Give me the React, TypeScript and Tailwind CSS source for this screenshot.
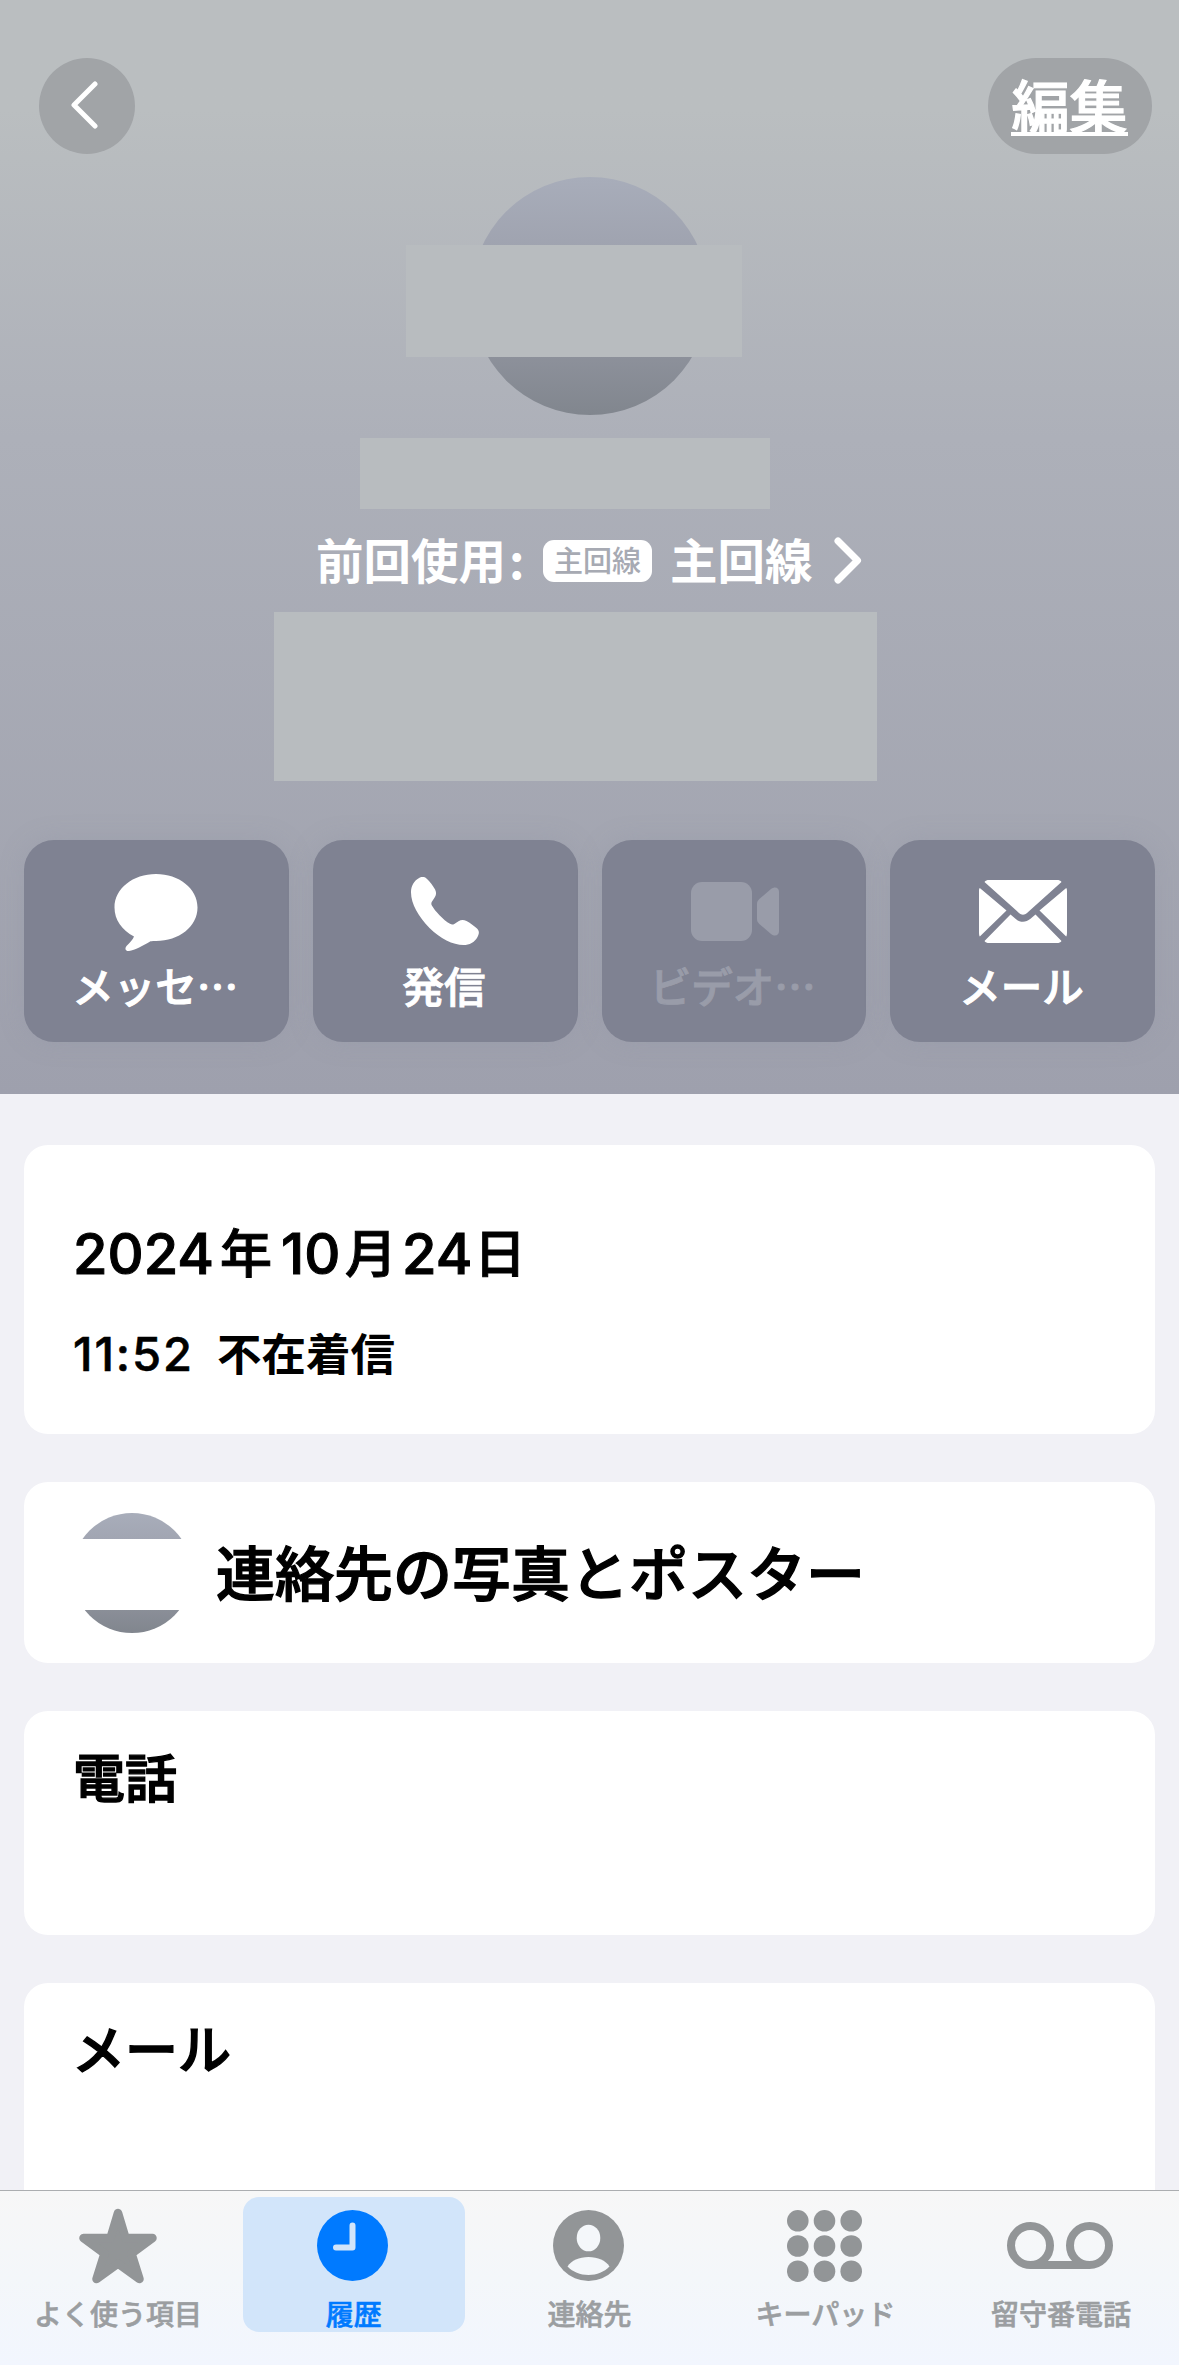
import type { ReactNode } from "react";

const Avatar = ({ className }: { className: string }) => (
  <div
    className={`rounded-full bg-linear-to-b from-[#a8adba] via-[#999ca8] to-[#81868e] ${className}`}
  />
);

const MessageIcon = () => (
  <svg className="mt-[3px] w-[84px] h-[78px]" viewBox="0 0 84 78" fill="currentColor">
    <path d="M42 0C65 0 83.500 14.500 83.500 33.500S65 67 42 67c-2 0-4 0-5.500.3C29 72 21 76 15 77c-3.500.4-4.500-2.500-2.500-5C16 68.500 19 65.500 20 62.500 8 56 .5 46 .5 33.500.5 14.500 19 0 42 0z" />
  </svg>
);

const PhoneIcon = () => (
  <svg className="w-[68px] h-[68px]" viewBox="0 0 68 68" fill="currentColor">
    <path d="M15.500 1.500C13.500-.5 11-.6 8.500.8 3 3.500 0 9 0 15.500c0 11 7.500 24.500 18.500 35.500C29 61.500 42 68 52.500 68c6 0 11-2.500 14-8 1.800-3.500 2-6-.5-8.500-3-2.800-7-5.500-10.500-7.500-3-1.500-5.500-1.300-8 .3l-4.200 2.700c-1.500.9-2.800.8-4.300-.2-3.500-2-7-5-10.500-8.600-3.500-3.500-6-6.700-7.500-9.400-.9-1.500-.9-2.800 0-4.200l2.500-3.800c1.900-2.900 2-5.300.6-8.300C22 9 19 4.500 15.500 1.500z" />
  </svg>
);

const VideoIcon = () => (
  <svg className="ml-[2px] w-[88px] h-[59px]" viewBox="0 0 88 59" fill="currentColor">
    <rect width="61" height="59" rx="11" />
    <path d="M66 22c0-2 .8-3.500 2.300-5L80 7c4-3 8-1.500 8 3v39c0 4.500-4 6-8 3L68.300 42C66.800 40.500 66 39 66 37z" />
  </svg>
);

const MailIcon = () => (
  <svg className="w-[88px] h-[63px]" viewBox="0 0 88 63" fill="currentColor">
    <path d="M5.500 2C6.500.5 8 0 10 0h68c2 0 3.500.5 4.500 2L48 33c-2.500 2.300-5.500 2.300-8 0z" />
    <path d="M.8 8L27.500 30.500.8 56.500C.2 55.500 0 54 0 52V11c0-1.500.2-2.500.8-3zM87.200 8L60.500 30.500 87.200 56.500c.6-1 .8-2.500.8-4.500V11c0-1.500-.2-2.500-.8-3z" />
    <path d="M31.500 34.500l5 4.300c5 4 10 4 15 0l5-4.300 26 26.500c-1 1.500-2.500 2-4.500 2H10c-2 0-3.500-.5-4.500-2z" />
  </svg>
);

const StarIcon = () => (
  <svg className="ml-[2px] w-[78px] h-[76px]" viewBox="0 0 78 76" fill="currentColor">
    <path
      d="M39 5L46.500 30H73.500L52.500 45.500L60.500 71L39 55.500L17.500 71L25.500 45.500L4.500 30H31.500Z"
      stroke="currentColor"
      strokeWidth="8.5"
      strokeLinejoin="round"
    />
  </svg>
);

const ClockIcon = () => (
  <svg className="size-[71px]" viewBox="0 0 71 71">
    <circle cx="35.5" cy="35.5" r="35.5" fill="currentColor" />
    <path
      d="M35.500 15.500V37.500H19"
      fill="none"
      stroke="#d2e5fa"
      strokeWidth="6"
      strokeLinecap="round"
      strokeLinejoin="round"
    />
  </svg>
);

const ContactIcon = () => (
  <svg className="size-[71px]" viewBox="0 0 71 71">
    <circle cx="35.5" cy="35.5" r="35.5" fill="currentColor" />
    <ellipse cx="35.500" cy="28" rx="11.800" ry="13.300" fill="#f4f7fa" />
    <path
      d="M14.500 56.500C18.500 50.500 26 47 35.500 47S52.500 50.500 56.500 56.500C51 62 44 65 35.500 65S20 62 14.500 56.500z"
      fill="#f4f7fa"
    />
  </svg>
);

const KeypadIcon = () => (
  <svg className="w-[75px] h-[72px]" viewBox="0 0 75 72" fill="currentColor">
    {[10.8, 36, 61.2].map((cy) =>
      [10.8, 37.5, 64.2].map((cx) => (
        <circle key={`${cx}-${cy}`} cx={cx} cy={cy} r="10.8" />
      ))
    )}
  </svg>
);

const VoicemailIcon = () => (
  <svg
    className="w-[106px] h-[47px]"
    viewBox="0 0 106 47"
    fill="none"
    stroke="currentColor"
    strokeWidth="8"
  >
    <circle cx="23.5" cy="23.500" r="19.500" />
    <circle cx="82.500" cy="23.500" r="19.500" />
    <path d="M23.500 43H82.500" />
  </svg>
);

interface ActionProps {
  icon: ReactNode;
  label: string;
  disabled?: boolean;
}

const actions: ActionProps[] = [
  { icon: <MessageIcon />, label: "メッセ…" },
  { icon: <PhoneIcon />, label: "発信" },
  { icon: <VideoIcon />, label: "ビデオ…", disabled: true },
  { icon: <MailIcon />, label: "メール" },
];

const Action = ({ icon, label, disabled }: ActionProps) => (
  <button
    disabled={disabled}
    className="h-[202px] rounded-[30px] bg-[#7f8292] text-white disabled:text-[#999ca9] flex flex-col items-center pt-[27px] shadow-[0_0_24px_rgba(140,143,160,0.25)]"
  >
    <span className="h-[88px] flex items-center justify-center">{icon}</span>
    <span className="mt-[5px] mr-[2px] text-[41.500px] leading-[50px] font-medium whitespace-nowrap [-webkit-text-stroke:1px_currentColor]">
      {label}
    </span>
  </button>
);

const tabs = [
  { icon: <StarIcon />, label: "よく使う項目" },
  { icon: <ClockIcon />, label: "履歴", active: true },
  { icon: <ContactIcon />, label: "連絡先" },
  { icon: <KeypadIcon />, label: "キーパッド" },
  { icon: <VoicemailIcon />, label: "留守番電話" },
];

const Header = () => (
  <header className="h-[1094px] shrink-0 bg-linear-to-b from-[#babec0] from-10% via-[#adb0b9] via-40% to-[#9ea0ad] text-white flex flex-col items-center">
    <div className="w-full h-[154px] pt-[58px] pl-[39px] pr-[27px] flex justify-between">
      <button className="size-24 rounded-full bg-[#a1a4a7] flex items-center justify-center">
        <svg
          className="w-[28px] h-[48px] -ml-[7px] -mt-[2px]"
          viewBox="0 0 28 48"
          fill="none"
          stroke="currentColor"
          strokeWidth="5"
          strokeLinecap="round"
          strokeLinejoin="round"
        >
          <path d="M25 3L4 24L25 45" />
        </svg>
      </button>
      <button className="w-[164px] h-24 rounded-full bg-[#a1a4a7] flex justify-center text-[58px] leading-[92px] font-medium [-webkit-text-stroke:1.2px_currentColor]">
        <span className="mr-[1px] h-[78px] border-b-4 border-white">編集</span>
      </button>
    </div>

    <div className="mt-[23px] h-[238px] relative">
      <Avatar className="size-[238px]" />
      <div className="absolute -left-[65px] top-[68px] w-[336px] h-[112px] bg-[#b8bcbf]" />
    </div>
    <div className="mt-[23px] mr-[50px] w-[410px] h-[71px] bg-[#b8bcbf]" />

    <div className="mt-[20px] h-[60px] w-full pl-[316px] flex items-center text-[47.500px] leading-[60px] font-bold">
      <span className="w-[193px] whitespace-nowrap">前回使用</span>
      <span className="w-[34px]">:</span>
      <span className="mt-[3px] w-[109px] h-[42px] rounded-[11px] bg-white text-[#a7aab3] text-[29px] leading-[38px] font-medium text-center">
        主回線
      </span>
      <span className="ml-[18px] whitespace-nowrap">主回線</span>
      <svg
        className="ml-[21px] mt-[3px] w-[28px] h-[47px]"
        viewBox="0 0 28 47"
        fill="none"
        stroke="currentColor"
        strokeWidth="7"
        strokeLinecap="round"
        strokeLinejoin="round"
      >
        <path d="M4 4L23.500 23.500L4 43" />
      </svg>
    </div>
    <div className="mt-[23px] mr-[28px] w-[603px] h-[169px] bg-[#b8bcbf]" />

    <div className="mt-[59px] w-full px-6 grid grid-cols-4 gap-6">
      {actions.map((action) => (
        <Action key={action.label} {...action} />
      ))}
    </div>
  </header>
);

const TabBar = () => (
  <nav className="h-[175px] shrink-0 border-t border-[#abadb0] bg-linear-to-b from-[#f7f7f7] via-[#f4f7fa] to-[#f2f6fe] grid grid-cols-5 pt-[6px]">
    {tabs.map(({ icon, label, active }) => (
      <div
        key={label}
        className={`mx-auto w-[222px] h-[135px] rounded-[16px] flex flex-col items-center ${
          active ? "bg-[#d2e5fa] text-[#007aff]" : "text-[#929597]"
        }`}
      >
        <span className="h-[99px] mr-[2px] flex items-center">{icon}</span>
        <span
          className={`text-[28px] leading-[38px] font-medium whitespace-nowrap [-webkit-text-stroke:0.6px_currentColor] ${
            active ? "" : "text-[#9b9ea1]"
          }`}
        >
          {label}
        </span>
      </div>
    ))}
  </nav>
);

export default function App() {
  return (
    <div
      lang="ja"
      className="w-[1179px] h-[2365px] overflow-hidden flex flex-col bg-[#f1f1f6] text-black font-['Noto_Sans_CJK_JP',sans-serif]"
    >
      <Header />

      <main className="flex-1 min-h-0 overflow-hidden px-6 pt-[51px] flex flex-col gap-[48px]">
        <section className="h-[289px] shrink-0 rounded-[24px] bg-white pl-[49px] pt-[74px] font-['Inter','Noto_Sans_CJK_JP',sans-serif]">
          <h2 className="text-[56px] leading-[70px] font-medium whitespace-nowrap flex [-webkit-text-stroke:1px_currentColor]">
            <span className="w-[147px]">2024</span>
            <span className="w-[61px] text-[52px] leading-[72px]">年</span>
            <span className="w-[64px]">10</span>
            <span className="w-[57px] text-[52px] leading-[72px]">月</span>
            <span className="w-[72px]">24</span>
            <span className="text-[52px] leading-[72px]">日</span>
          </h2>
          <p className="mt-[31px] text-[47px] leading-[64px] flex whitespace-nowrap">
            <span className="w-[144px] font-medium tracking-[1.900px] [-webkit-text-stroke:0.6px_currentColor]">
              11:52
            </span>
            <span className="text-[44.500px] leading-[67px] font-bold">不在着信</span>
          </p>
        </section>

        <section className="h-[181px] shrink-0 rounded-[24px] bg-white pl-[48px] flex items-center">
          <div className="relative">
            <Avatar className="size-[120px]" />
            <div className="absolute inset-x-0 top-[26px] h-[71px] bg-white" />
          </div>
          <h2 className="ml-6 mb-[4px] text-[59px] leading-[70px] font-medium whitespace-nowrap [-webkit-text-stroke:1.4px_currentColor]">
            連絡先の写真とポスター
          </h2>
        </section>

        <section className="h-[224px] shrink-0 rounded-[24px] bg-white pl-[49px] pt-[30px]">
          <h2 className="text-[52px] leading-[70px] font-medium [-webkit-text-stroke:1.4px_currentColor]">
            電話
          </h2>
        </section>

        <section className="h-[260px] shrink-0 rounded-[24px] bg-white pl-[48px] pt-[29px]">
          <h2 className="text-[53px] leading-[70px] font-medium [-webkit-text-stroke:1.4px_currentColor]">
            メール
          </h2>
        </section>
      </main>

      <TabBar />
    </div>
  );
}
